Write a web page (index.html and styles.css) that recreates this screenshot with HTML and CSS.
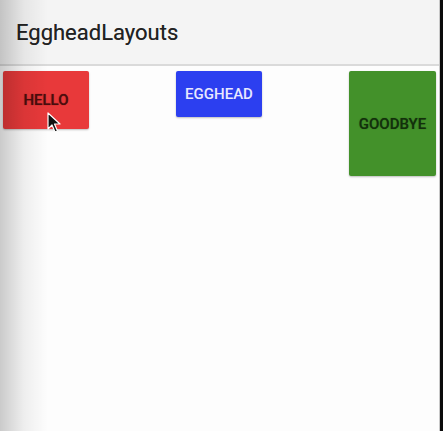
FILE: index.html
```html
<!DOCTYPE html>
<html>
<head>
<meta charset="utf-8">
<link rel="stylesheet" href="styles.css">
</head>
<body>
<div class="screen">
  <div class="app">
    <header class="toolbar">EggheadLayouts</header>
    <main class="content">
      <div class="btn btn-hello">HELLO</div>
      <div class="btn btn-egghead">EGGHEAD</div>
      <div class="btn btn-goodbye">GOODBYE</div>
    </main>
    <div class="edge-shadow"></div>
    <svg class="cursor" width="14" height="22" viewBox="0 0 14 22">
      <path d="M1 1 L1 17 L5 13 L8 20 L10.5 19 L7.5 12 L13 12 Z" fill="#111" stroke="#fff" stroke-width="1.2" stroke-linejoin="round"/>
    </svg>
  </div>
  <div class="frame"></div>
</div>
</body>
</html>
```
FILE: styles.css
```css
html, body {
  margin: 0;
  padding: 0;
  background: #fdfdfd;
}
.screen {
  display: flex;
  width: 443px;
  height: 431px;
  overflow: hidden;
}
.app {
  position: relative;
  flex: 1;
  display: flex;
  flex-direction: column;
  background: #fdfdfd;
  border-right: 1px solid #c8c8c8;
}
.frame {
  width: 3px;
  background: #0a0a0a;
}
.toolbar {
  height: 66px;
  flex: none;
  box-sizing: border-box;
  background: #f4f4f4;
  border-bottom: 2px solid #dadada;
  padding-left: 16px;
  display: flex;
  align-items: center;
  font-family: Roboto, "Liberation Sans", sans-serif;
  font-size: 22px;
  color: #222;
  text-shadow: 0 0 0.6px rgba(0,0,0,0.5);
}
.content {
  flex: 1;
  display: flex;
  justify-content: space-between;
  align-items: flex-start;
  padding: 5px 3px 0 3px;
}
.btn {
  width: 86px;
  display: flex;
  align-items: center;
  justify-content: center;
  border-radius: 2px;
  font-family: Roboto, "Liberation Sans", sans-serif;
  font-weight: 500;
  font-size: 15px;
  box-shadow: 0 1px 2px rgba(0,0,0,0.25);
}
.btn-hello {
  height: 58px;
  background: #e8393a;
  color: #4a0d0d;
  text-shadow: 0 0 1px rgba(74,13,13,0.7);
}
.btn-egghead {
  height: 46px;
  background: #2c3ff0;
  color: #e8e8ff;
}
.btn-goodbye {
  width: 87px;
  height: 105px;
  background: #43912a;
  color: #13300c;
  text-shadow: 0 0 1px rgba(19,48,12,0.6);
}
.edge-shadow {
  position: absolute;
  left: 0;
  top: 0;
  bottom: 0;
  width: 48px;
  background: linear-gradient(to right, rgba(0,0,0,0.2), rgba(0,0,0,0.06) 50%, rgba(0,0,0,0));
  pointer-events: none;
}
.cursor {
  position: absolute;
  left: 47px;
  top: 112px;
}
```
